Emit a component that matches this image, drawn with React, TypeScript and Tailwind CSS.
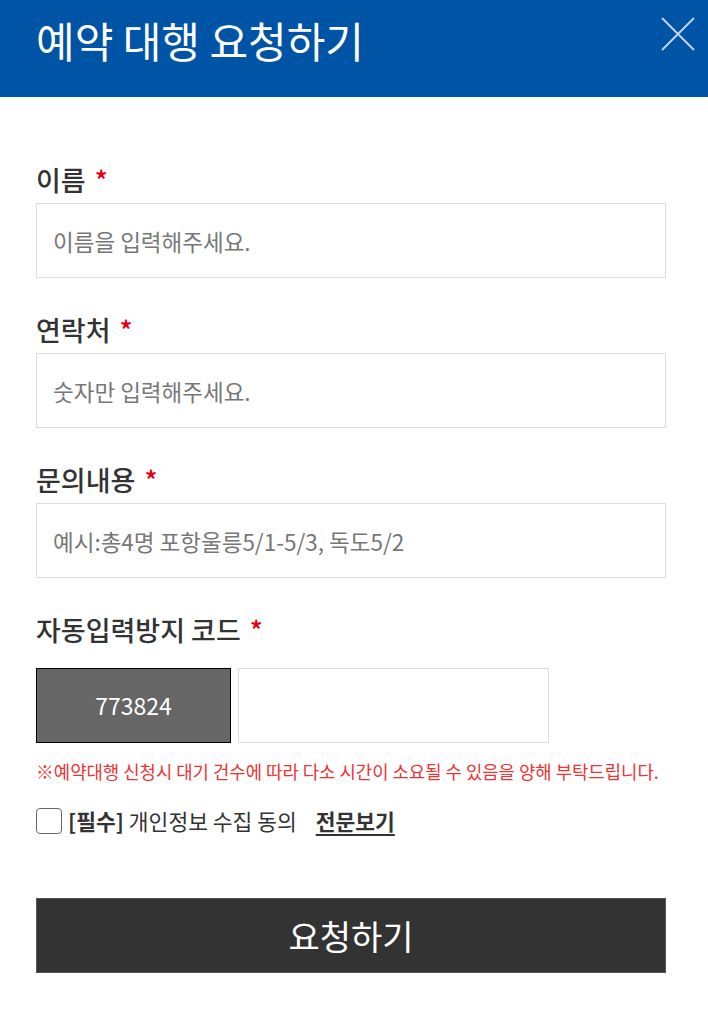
export default function App() {
  const font = { fontFamily: '"Noto Sans CJK KR", "Noto Sans", sans-serif' }
  return (
    <div className="w-[708px] min-h-[1012px] bg-white" style={font}>
      <div className="flex h-[97px] items-start justify-between bg-[#0054a6] pl-[36px] pr-[12px]">
        <h1 className="mt-[10px] text-[42px] font-normal leading-[60px] text-white">예약 대행 요청하기</h1>
        <button className="mt-[16px] h-[36px] w-[36px]" aria-label="close">
          <svg viewBox="0 0 36 36" className="h-[36px] w-[36px]">
            <path d="M2 2L34 34M34 2L2 34" stroke="#c8d6ea" strokeWidth="1.8" fill="none" />
          </svg>
        </button>
      </div>

      <form className="flex flex-col pl-[36px] pr-[42px] pt-[64px]">
        <Field label="이름" placeholder="이름을 입력해주세요." />
        <Field label="연락처" placeholder="숫자만 입력해주세요." />
        <Field label="문의내용" placeholder="예시:총4명 포항울릉5/1-5/3, 독도5/2" />

        <Label text="자동입력방지 코드" />
        <div className="mt-[19px] flex gap-[7px]">
          <div className="flex h-[75px] w-[195px] items-center justify-center border border-black bg-[#666666] text-[23px] text-white">
            773824
          </div>
          <input className="h-[75px] w-[311px] border border-[#dddddd] outline-none" />
        </div>

        <p className="mt-[15px] whitespace-nowrap text-[17.8px] leading-[26px] text-[#ee3333]">
          ※예약대행 신청시 대기 건수에 따라 다소 시간이 소요될 수 있음을 양해 부탁드립니다.
        </p>

        <label className="mt-[22px] flex items-center text-[21.5px] leading-[30px] text-[#333333]">
          <span className="mr-[6px] h-[26px] w-[26px] rounded-[4px] border border-[#666666] bg-white" />
          <span className="font-bold">[필수]</span>
          <span className="ml-[5px]">개인정보 수집 동의</span>
          <span className="ml-[19px] font-bold underline underline-offset-[4px]">전문보기</span>
        </label>

        <button
          type="button"
          className="mt-[62px] h-[75px] w-full border border-[#555555] bg-[#333333] text-[34px] text-white"
        >
          요청하기
        </button>
      </form>
    </div>
  )
}

function Label({ text }: { text: string }) {
  return (
    <div className="flex items-center text-[27px] font-medium leading-[38px] text-[#333333]">
      {text}
      <span className="ml-[9px] text-[#e60012]">*</span>
    </div>
  )
}

function Field({ label, placeholder }: { label: string; placeholder: string }) {
  return (
    <div className="mb-[33px] flex flex-col">
      <Label text={label} />
      <input
        className="mt-[4px] h-[75px] w-full border border-[#dddddd] px-[16px] text-[22.5px] text-[#333333] outline-none placeholder:text-[#777777]"
        placeholder={placeholder}
      />
    </div>
  )
}
